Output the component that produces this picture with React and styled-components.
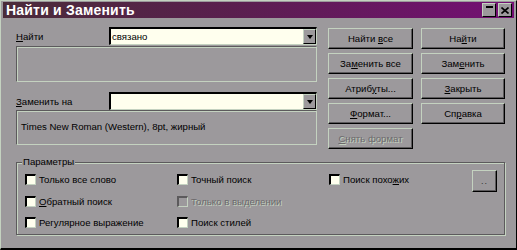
import React from "react";
import styled, { createGlobalStyle } from "styled-components";

const LIGHT = "#c4d2c0";
const DARK = "#5c5a5c";
const FACE = "#9c999c";
const FIELD = "#ffffee";

const Global = createGlobalStyle`
  body {
    margin: 0;
    background: ${FACE};
    font-family: "Liberation Sans", Arial, sans-serif;
    font-size: 9.6px;
    color: #000;
  }
`;

const Window = styled.div`
  width: 517px;
  height: 250px;
  box-sizing: border-box;
  background: ${FACE};
  border-left: 1px solid ${LIGHT};
  border-top: 1px solid ${LIGHT};
  border-right: 1px solid #000;
  border-bottom: 2px solid #000;
  padding: 1px 2px 0 2px;
  display: flex;
  flex-direction: column;
`;

const TitleBar = styled.div`
  height: 16px;
  display: flex;
  align-items: center;
  padding: 0 2px 0 3px;
  background: linear-gradient(to right, #4a2c3a 0%, #5a1f4e 45%, #741074 100%);
`;

const Title = styled.div`
  flex: 1;
  color: #fff;
  font-weight: bold;
  font-size: 14px;
  letter-spacing: 0.2px;
`;

const CaptionButton = styled.div`
  width: 12px;
  height: 12px;
  margin-left: ${(p) => (p.gap ? "2px" : "0")};
  background: ${FACE};
  border-top: 1px solid ${LIGHT};
  border-left: 1px solid ${LIGHT};
  border-right: 1px solid #000;
  border-bottom: 1px solid #000;
  display: flex;
  align-items: ${(p) => (p.top ? "flex-start" : "center")};
  justify-content: center;
`;

const MinBar = styled.div`
  width: 7px;
  height: 2px;
  margin-top: 2px;
  background: #000;
`;

const Body = styled.div`
  padding: 9px 9px 0 13px;
  display: flex;
  flex-direction: column;
`;

const TopSection = styled.div`
  display: flex;
  gap: 11px;
`;

const LeftCol = styled.div`
  width: 302px;
  display: flex;
  flex-direction: column;
`;

const FieldRow = styled.div`
  display: flex;
  align-items: center;
  height: 18px;
  margin-top: ${(p) => p.mt || 0}px;
`;

const Label = styled.div`
  width: 93px;
`;

const Combo = styled.div`
  flex: 1;
  height: 18px;
  box-sizing: border-box;
  display: flex;
  background: ${FIELD};
  border-top: 2px solid #000;
  border-left: 2px solid #000;
  border-right: 1px solid ${LIGHT};
  border-bottom: 1px solid ${LIGHT};
`;

const ComboText = styled.div`
  flex: 1;
  padding-left: 1px;
  line-height: 15px;
`;

const ComboArrow = styled.div`
  width: 13px;
  box-sizing: border-box;
  background: ${FACE};
  border-top: 1px solid ${LIGHT};
  border-left: 1px solid ${LIGHT};
  border-right: 1px solid #000;
  border-bottom: 1px solid #000;
  display: flex;
  align-items: center;
  justify-content: center;
  &::after {
    content: "";
    border-left: 3px solid transparent;
    border-right: 3px solid transparent;
    border-top: 4px solid #000;
  }
`;

const Panel = styled.div`
  height: ${(p) => p.h}px;
  margin-top: ${(p) => p.mt || 0}px;
  box-sizing: border-box;
  border-top: 1px solid ${DARK};
  border-left: 1px solid ${DARK};
  border-right: 1px solid ${LIGHT};
  border-bottom: 1px solid ${LIGHT};
  box-shadow: inset 1px 1px 0 ${LIGHT};
  padding: 10px 4px;
`;

const ButtonGrid = styled.div`
  margin-top: 1px;
  display: grid;
  grid-template-columns: 85px 84px;
  grid-auto-rows: 21px;
  column-gap: 8px;
  row-gap: 4px;
`;

const Button = styled.div`
  box-sizing: border-box;
  width: ${(p) => (p.w ? p.w + "px" : "auto")};
  height: ${(p) => (p.h ? p.h + "px" : "auto")};
  background: ${FACE};
  border-top: 1px solid ${LIGHT};
  border-left: 1px solid ${LIGHT};
  border-right: 1px solid #000;
  border-bottom: 1px solid #000;
  box-shadow: inset -1px -1px 0 ${DARK};
  display: flex;
  align-items: center;
  justify-content: center;
  color: ${(p) => (p.disabled ? "#6c6a6c" : "#000")};
  text-shadow: ${(p) => (p.disabled ? `1px 1px 0 ${LIGHT}` : "none")};
`;

const Group = styled.div`
  margin-top: 13px;
  height: 73px;
  box-sizing: border-box;
  border: 1px solid ${DARK};
  box-shadow: 1px 1px 0 ${LIGHT}, inset 1px 1px 0 ${LIGHT};
  padding: 0 0 0 8px;
`;

const Legend = styled.div`
  width: fit-content;
  height: 12px;
  margin: -7px 0 0 -3px;
  padding: 0 1px;
  background: ${FACE};
  line-height: 12px;
`;

const OptionGrid = styled.div`
  margin-top: 1px;
  display: grid;
  grid-template-columns: 152px 152px 143px 25px;
  grid-auto-rows: 21.5px;
`;

const Option = styled.label`
  display: flex;
  align-items: center;
  gap: 3px;
  color: ${(p) => (p.disabled ? "#6c6a6c" : "#000")};
  text-shadow: ${(p) => (p.disabled ? `1px 1px 0 ${LIGHT}` : "none")};
`;

const Box = styled.span`
  width: 11px;
  height: 11px;
  box-sizing: border-box;
  flex-shrink: 0;
  background: ${(p) => (p.disabled ? FACE : FIELD)};
  border-top: 2px solid ${(p) => (p.disabled ? DARK : "#000")};
  border-left: 2px solid ${(p) => (p.disabled ? DARK : "#000")};
  border-right: 1px solid ${LIGHT};
  border-bottom: 1px solid ${LIGHT};
  text-shadow: none;
`;

const MoreCell = styled.div`
  grid-column: 4;
  grid-row: 1 / span 2;
  margin-top: 1px;
`;

const Dots = styled.span`
  font-size: 9px;
  color: #333;
  letter-spacing: 1px;
`;

const Spacer = styled.div``;

const options = [
  { text: "Только все слово" },
  { text: "Точный поиск" },
  { text: "Поиск похожих", u: ["Поиск похо", "ж", "их"] },
  { text: "Обратный поиск", u: ["", "О", "братный поиск"] },
  { text: "Только в выделении", disabled: true },
  null,
  { text: "Регулярное выражение" },
  { text: "Поиск стилей" },
  null,
];

const Acc = ({ parts, text }) =>
  parts ? (
    <span>
      {parts[0]}
      <u>{parts[1]}</u>
      {parts[2]}
    </span>
  ) : (
    <span>{text}</span>
  );

export default function App() {
  const cells = [];
  options.forEach((o, i) => {
    cells.push(
      o ? (
        <Option key={i} disabled={o.disabled}>
          <Box disabled={o.disabled} />
          <Acc parts={o.u} text={o.text} />
        </Option>
      ) : (
        <Spacer key={i} />
      )
    );
    if (i === 2) {
      cells.push(
        <MoreCell key="more">
          <Button w={25} h={22}>
            <Dots>..</Dots>
          </Button>
        </MoreCell>
      );
    }
  });

  return (
    <>
      <Global />
      <Window>
        <TitleBar>
          <Title>Найти и Заменить</Title>
          <CaptionButton top>
            <MinBar />
          </CaptionButton>
          <CaptionButton gap>
            <svg width="8" height="7" viewBox="0 0 8 7">
              <path d="M0.5 0.5 L7.5 6.5 M7.5 0.5 L0.5 6.5" stroke="#000" strokeWidth="1.6" />
            </svg>
          </CaptionButton>
        </TitleBar>
        <Body>
          <TopSection>
            <LeftCol>
              <FieldRow>
                <Label>
                  <Acc parts={["", "Н", "айти"]} />
                </Label>
                <Combo>
                  <ComboText>связано</ComboText>
                  <ComboArrow />
                </Combo>
              </FieldRow>
              <Panel h={36} mt={1} />
              <FieldRow mt={10}>
                <Label>
                  <Acc parts={["", "З", "аменить на"]} />
                </Label>
                <Combo>
                  <ComboText />
                  <ComboArrow />
                </Combo>
              </FieldRow>
              <Panel h={35}>Times New Roman (Western), 8pt, жирный</Panel>
            </LeftCol>
            <ButtonGrid>
              <Button>
                <Acc parts={["Найти ", "в", "се"]} />
              </Button>
              <Button>
                <Acc parts={["На", "й", "ти"]} />
              </Button>
              <Button>
                <Acc parts={["За", "м", "енить все"]} />
              </Button>
              <Button>
                <Acc parts={["Зам", "е", "нить"]} />
              </Button>
              <Button>
                <Acc parts={["Атриб", "у", "ты..."]} />
              </Button>
              <Button>
                <Acc parts={["", "З", "акрыть"]} />
              </Button>
              <Button>
                <Acc parts={["", "Ф", "ормат..."]} />
              </Button>
              <Button>
                <Acc parts={["Сп", "р", "авка"]} />
              </Button>
              <Button disabled>
                <Acc parts={["", "С", "нять формат"]} />
              </Button>
            </ButtonGrid>
          </TopSection>
          <Group>
            <Legend>Параметры</Legend>
            <OptionGrid>{cells}</OptionGrid>
          </Group>
        </Body>
      </Window>
    </>
  );
}
